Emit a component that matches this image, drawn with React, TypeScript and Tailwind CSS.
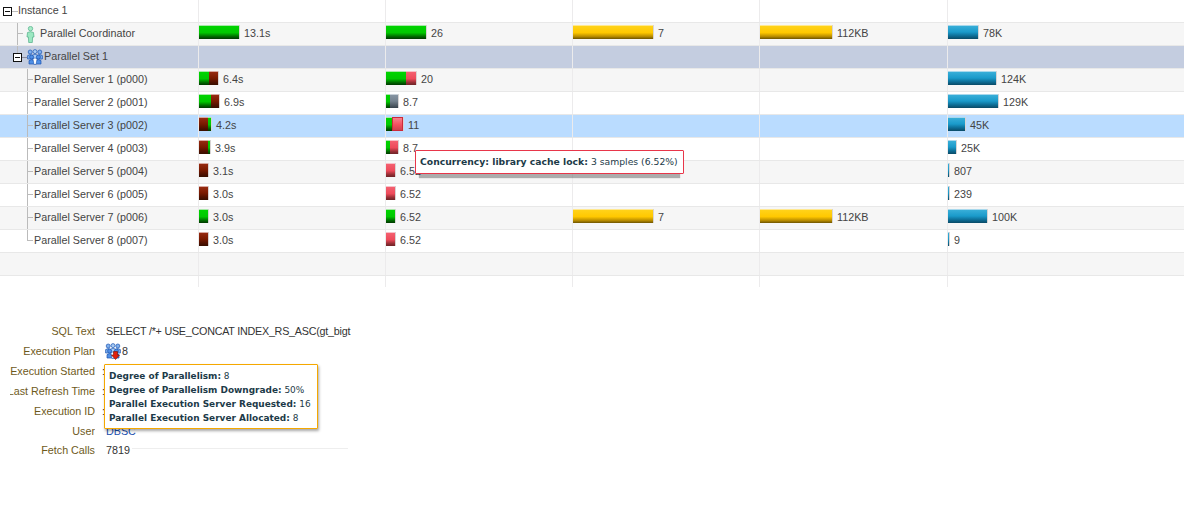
import React from "react";

const FONT = "font-['Liberation_Sans',Arial,sans-serif]";

const kinds: Record<string, string> = {
  g: "bg-[linear-gradient(to_bottom,#a8e8a8_0px,#a8e8a8_1px,#00d400_1px,#00c800_55%,#006000_85%,#003800_100%)]",
  d: "bg-[linear-gradient(to_bottom,#d8a8a0_0px,#d8a8a0_1px,#962a10_1px,#7a1a00_50%,#4a1000_85%,#381000_100%)]",
  r: "bg-[linear-gradient(to_bottom,#f8c0c8_0px,#f8c0c8_1px,#f46070_1px,#ee4a5a_55%,#8e2c32_85%,#6e2428_100%)]",
  a: "bg-[linear-gradient(to_bottom,#c8d0d8_0px,#c8d0d8_1px,#8694a2_1px,#75828f_50%,#4f5a64_82%,#38424c_100%)]",
  y: "bg-[linear-gradient(to_bottom,#ffe890_0px,#ffe890_1px,#ffd21a_1px,#ffc800_55%,#b88c00_82%,#6e5400_100%)]",
  b: "bg-[linear-gradient(to_bottom,#a8d8ec_0px,#a8d8ec_1px,#38aed8_1px,#1a9aca_50%,#0d6c94_78%,#0a4a66_100%)]",
  h: "bg-[linear-gradient(to_bottom,#f78a92_0%,#f2505f_55%,#c8404c_100%)] outline outline-1 -outline-offset-1 outline-[#cc2a3a]",
};

type Seg = [string, number];
type Cell = { segs: Seg[]; text: string } | null;
type Row = {
  name?: string;
  bg: string;
  tree?: "instance" | "coord" | "set" | "server" | "last";
  cells: Cell[];
};

const yb: Cell = { segs: [["y", 80]], text: "7" };
const yk: Cell = { segs: [["y", 72]], text: "112KB" };

const rows: Row[] = [
  { name: "Instance 1", tree: "instance", bg: "bg-white", cells: [null, null, null, null, null] },
  {
    name: "Parallel Coordinator",
    tree: "coord",
    bg: "bg-[#f6f6f6]",
    cells: [
      { segs: [["g", 40]], text: "13.1s" },
      { segs: [["g", 40]], text: "26" },
      yb,
      yk,
      { segs: [["b", 30]], text: "78K" },
    ],
  },
  { name: "Parallel Set 1", tree: "set", bg: "bg-[#c4cde0]", cells: [null, null, null, null, null] },
  {
    name: "Parallel Server 1 (p000)",
    tree: "server",
    bg: "bg-[#f6f6f6]",
    cells: [
      { segs: [["g", 10], ["d", 9]], text: "6.4s" },
      { segs: [["g", 20], ["r", 10]], text: "20" },
      null,
      null,
      { segs: [["b", 48]], text: "124K" },
    ],
  },
  {
    name: "Parallel Server 2 (p001)",
    tree: "server",
    bg: "bg-white",
    cells: [
      { segs: [["g", 12], ["d", 8]], text: "6.9s" },
      { segs: [["g", 4], ["a", 8]], text: "8.7" },
      null,
      null,
      { segs: [["b", 50]], text: "129K" },
    ],
  },
  {
    name: "Parallel Server 3 (p002)",
    tree: "server",
    bg: "bg-[#badcff]",
    cells: [
      { segs: [["d", 9], ["g", 3]], text: "4.2s" },
      { segs: [["g", 6], ["h", 11]], text: "11" },
      null,
      null,
      { segs: [["b", 17]], text: "45K" },
    ],
  },
  {
    name: "Parallel Server 4 (p003)",
    tree: "server",
    bg: "bg-white",
    cells: [
      { segs: [["d", 9], ["g", 2]], text: "3.9s" },
      { segs: [["g", 4], ["r", 8]], text: "8.7" },
      null,
      null,
      { segs: [["b", 8]], text: "25K" },
    ],
  },
  {
    name: "Parallel Server 5 (p004)",
    tree: "server",
    bg: "bg-[#f6f6f6]",
    cells: [
      { segs: [["d", 9]], text: "3.1s" },
      { segs: [["r", 9]], text: "6.52" },
      null,
      null,
      { segs: [["b", 1]], text: "807" },
    ],
  },
  {
    name: "Parallel Server 6 (p005)",
    tree: "server",
    bg: "bg-white",
    cells: [
      { segs: [["d", 9]], text: "3.0s" },
      { segs: [["r", 9]], text: "6.52" },
      null,
      null,
      { segs: [["b", 1]], text: "239" },
    ],
  },
  {
    name: "Parallel Server 7 (p006)",
    tree: "server",
    bg: "bg-[#f6f6f6]",
    cells: [
      { segs: [["g", 9]], text: "3.0s" },
      { segs: [["g", 9]], text: "6.52" },
      yb,
      yk,
      { segs: [["b", 39]], text: "100K" },
    ],
  },
  {
    name: "Parallel Server 8 (p007)",
    tree: "last",
    bg: "bg-white",
    cells: [
      { segs: [["d", 9]], text: "3.0s" },
      { segs: [["r", 9]], text: "6.52" },
      null,
      null,
      { segs: [["b", 1]], text: "9" },
    ],
  },
  { bg: "bg-[#f6f6f6]", cells: [null, null, null, null, null] },
];

const colW = ["w-[187px]", "w-[187px]", "w-[187px]", "w-[188px]", "flex-1"];

function MinusBox() {
  return (
    <svg width="9" height="9" viewBox="0 0 9 9" className="shrink-0">
      <rect x="0.5" y="0.5" width="8" height="8" fill="#fff" stroke="#111" />
      <path d="M2 4.5h5" stroke="#111" />
    </svg>
  );
}

function Person() {
  return (
    <svg width="9" height="17" viewBox="0 0 9 17" className="shrink-0">
      <circle cx="4.5" cy="2.6" r="2.2" fill="#a8ecc8" stroke="#4fae86" strokeWidth="0.7" />
      <path
        d="M1.5 6.5Q4.5 4.8 7.5 6.5L8 11H6.6L6.3 16.5H2.7L2.4 11H1Z"
        fill="#9ce8c2"
        stroke="#4fae86"
        strokeWidth="0.7"
      />
    </svg>
  );
}

function People() {
  const one = (x: number, y: number, fill: string) => (
    <g>
      <circle cx={x} cy={y} r="2" fill={fill} stroke="#1d55b0" strokeWidth="0.7" />
      <path
        d={`M${x - 2.6} ${y + 7}V${y + 3.6}Q${x} ${y + 1.6} ${x + 2.6} ${y + 3.6}V${y + 7}Z`}
        fill={fill}
        stroke="#1d55b0"
        strokeWidth="0.7"
      />
    </g>
  );
  return (
    <svg width="16" height="16" viewBox="0 0 16 16" className="shrink-0">
      {one(3.2, 3, "#7fb0ee")}
      {one(12.8, 3, "#7fb0ee")}
      {one(8, 2.6, "#a8ccf5")}
      {one(4.6, 8, "#4f8fe6")}
      {one(11.4, 8, "#4f8fe6")}
      <path d="M8 8.5l2 2-1 5H7l-1-5z" fill="#fff" stroke="#1d55b0" strokeWidth="0.6" />
    </svg>
  );
}

function Bar({ cell }: { cell: Cell }) {
  if (!cell) return null;
  return (
    <div className="flex h-full items-center">
      <div className="mb-[4px] flex h-[14px] shrink-0 border-r border-[#d8d4d4]">
        {cell.segs.map(([k, w], i) => (
          <div key={i} className={kinds[k]} style={{ width: w }} />
        ))}
      </div>
      <span className="mb-[2px] ml-[4px] text-[#444]">{cell.text}</span>
    </div>
  );
}

/* Tree elbow: a vertical rule with a tick at mid-row, carried on down when the branch continues. */
function Elbow({ down }: { down: boolean }) {
  return (
    <div className="flex h-full w-[6px] shrink-0 flex-col">
      <div className="h-[11px] border-b border-l border-[#bbb]" />
      {down && <div className="flex-1 border-l border-[#bbb]" />}
    </div>
  );
}

function TreeCell({ row }: { row: Row }) {
  const t = row.tree;
  if (!t) return <div className="h-full w-[198px] shrink-0" />;
  return (
    <div className="flex h-full w-[198px] shrink-0 items-center text-[#444]">
      {t === "instance" && (
        <>
          <div className="ml-[3px]">
            <MinusBox />
          </div>
          <div className="h-px w-[6px] bg-[#bbb]" />
          <span className="mb-[2px]">{row.name}</span>
        </>
      )}
      {t === "coord" && (
        <>
          <div className="ml-[17px] h-full">
            <Elbow down />
          </div>
          <div className="ml-[3px]">
            <Person />
          </div>
          <span className="mb-[2px] ml-[5px]">{row.name}</span>
        </>
      )}
      {t === "set" && (
        <>
          <div className="ml-[13px] flex h-full flex-col items-center">
            <div className="h-[7px] w-px bg-[#bbb]" />
            <MinusBox />
          </div>
          <div className="h-px w-[5px] bg-[#8a8a9a]" />
          <People />
          <span className="mb-[2px] ml-[1px]">{row.name}</span>
        </>
      )}
      {(t === "server" || t === "last") && (
        <>
          <div className="ml-[27px] h-full">
            <Elbow down={t === "server"} />
          </div>
          <span className="mb-[2px] ml-[1px]">{row.name}</span>
        </>
      )}
    </div>
  );
}

const hiddenValue = <span className="-ml-[4px] text-[#333]">:</span>;

const info: [string, React.ReactNode][] = [
  [
    "SQL Text",
    <span className="whitespace-nowrap tracking-[-0.24px] text-[#333]">
      SELECT /*+ USE_CONCAT INDEX_RS_ASC(gt_bigt
    </span>,
  ],
  [
    "Execution Plan",
    <span className="flex items-center text-[#333]">
      <span className="relative -ml-[1px] mr-[1px] inline-flex">
        <People />
        <svg width="9" height="9" viewBox="0 0 9 9" className="absolute left-[6px] top-[8px]">
          <path d="M2.5 0.5h4v3.5h2L4.5 8.5 0.5 4h2z" fill="#e0200c" stroke="#7a1000" strokeWidth="0.6" />
        </svg>
      </span>
      8
    </span>,
  ],
  ["Execution Started", hiddenValue],
  ["Last Refresh Time", hiddenValue],
  ["Execution ID", hiddenValue],
  ["User", <span className="text-[#1a4fb0]">DBSC</span>],
  ["Fetch Calls", <span className="text-[#333]">7819</span>],
];

export default function App() {
  return (
    <div className={`${FONT} relative h-[512px] w-[1184px] overflow-hidden bg-white text-[10.75px]`}>
      <div>
        {rows.map((row, i) => (
          <div key={i} className={`flex h-[23px] border-b border-[#e8e8e8] ${row.bg}`}>
            <TreeCell row={row} />
            {row.cells.map((c, j) => (
              <div key={j} className={`${colW[j]} h-full border-l border-[#ecebec]`}>
                <Bar cell={c} />
              </div>
            ))}
          </div>
        ))}
        <div className="flex h-[11px]">
          <div className="w-[198px] shrink-0" />
          {colW.map((w, j) => (
            <div key={j} className={`${w} h-full border-l border-[#ecebec]`} />
          ))}
        </div>
      </div>

      <div className="mt-[34px] ml-[10px] flex w-[338px] flex-col">
        {info.map(([label, value], i) => (
          <div key={i} className="flex h-[20px] items-center last:h-[18px]">
            <div className="flex w-[85px] shrink-0 justify-end overflow-hidden whitespace-nowrap text-[#6e5a1c]">
              {label}
            </div>
            <div className="ml-[11px]">{value}</div>
            {i === info.length - 1 && <div className="mb-[4px] ml-[2px] h-px flex-1 bg-[#eee]" />}
          </div>
        ))}
      </div>

      <div className="absolute left-[415px] top-[150px] whitespace-nowrap rounded-[1px] border border-[#e8364a] bg-white py-[4px] pl-[4px] pr-[5px] font-['DejaVu_Sans',sans-serif] text-[9.25px] leading-[14px] text-[#1c3a48] shadow-[0_8px_1px_-4px_rgba(0,0,0,0.3)]">
        <b>Concurrency: library cache lock:</b> 3 samples (6.52%)
      </div>

      <div className="absolute left-[104px] top-[364px] h-[65px] w-[214px] whitespace-nowrap rounded-[1px] border border-[#f5a800] bg-white px-[4px] py-[4px] font-['DejaVu_Sans',sans-serif] text-[8.95px] leading-[14px] text-[#1c3a48] shadow-[1px_2px_3px_rgba(0,0,0,0.35)]">
        <div><b>Degree of Parallelism:</b> 8</div>
        <div><b>Degree of Parallelism Downgrade:</b> 50%</div>
        <div><b>Parallel Execution Server Requested:</b> 16</div>
        <div><b>Parallel Execution Server Allocated:</b> 8</div>
      </div>
    </div>
  );
}
